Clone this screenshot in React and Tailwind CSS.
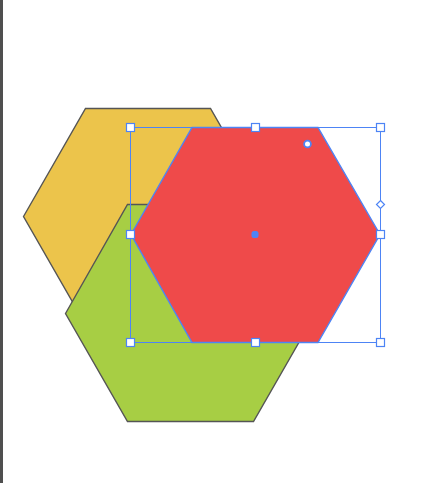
import React from 'react';

const handles = [
  [130, 127], [255, 127], [380, 127],
  [130, 234], [380, 234],
  [130, 342], [255, 342], [380, 342],
];

const BLUE = '#4d84f5';

const hex = (pts) => pts.map((p) => p.join(',')).join(' ');

export default function App() {
  return (
    <div className="flex w-[430px] h-[483px] bg-white overflow-hidden">
      <div className="w-[3px] h-full bg-[#4f4f4f]" />
      <svg width="427" height="483" viewBox="3 0 427 483" className="block">
        {/* yellow */}
        <polygon
          points={hex([[23.5, 216.5], [85.5, 108.5], [210.5, 108.5], [272.5, 216.5], [210.5, 324.5], [85.5, 324.5]])}
          fill="#ecc44b"
          stroke="#555555"
          strokeWidth="1.4"
        />
        {/* green */}
        <polygon
          points={hex([[65.5, 313.5], [127.5, 204.5], [253.5, 204.5], [315.5, 313.5], [253.5, 421.5], [127.5, 421.5]])}
          fill="#a7ce44"
          stroke="#555555"
          strokeWidth="1.4"
        />
        {/* red (selected) */}
        <polygon
          points={hex([[131, 234.5], [192, 127.5], [318, 127.5], [380, 234.5], [318, 342.5], [192, 342.5]])}
          fill="#ef4a4a"
          stroke={BLUE}
          strokeWidth="1.4"
        />
        {/* selection box */}
        <rect x="130.5" y="127.5" width="250" height="215" fill="none" stroke={BLUE} strokeWidth="1" />
        {handles.map(([x, y], i) => (
          <rect key={i} x={x - 3.5} y={y - 3.5} width="8" height="8" fill="#ffffff" stroke={BLUE} strokeWidth="1.2" />
        ))}
        {/* diamond */}
        <polygon points={hex([[380.5, 200.5], [384.5, 204.5], [380.5, 208.5], [376.5, 204.5]])} fill="#ffffff" stroke={BLUE} strokeWidth="1.2" />
        {/* rotation handle */}
        <circle cx="307.5" cy="144" r="3.4" fill="#ffffff" stroke={BLUE} strokeWidth="1.8" />
        {/* center */}
        <rect x="251.5" y="231" width="7" height="7" rx="2.5" fill={BLUE} />
      </svg>
    </div>
  );
}
